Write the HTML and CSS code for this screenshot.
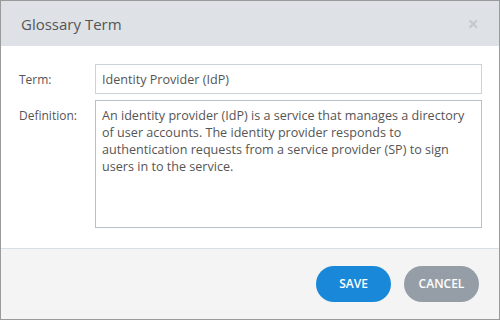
FILE: index.html
```html
<!DOCTYPE html>
<html lang="en">
<head>
    <meta charset="UTF-8">
    <title>Glossary Term</title>
    <link rel="stylesheet" href="styles.css">
</head>
<body>
    <div class="dialog">
        <div class="dialog-header">
            <h2>Glossary Term</h2>
            <span class="close">&times;</span>
        </div>

        <div class="dialog-body">
            <div class="row">
                <label for="term">Term:</label>
                <input type="text" id="term" value="Identity Provider (IdP)">
            </div>
            <div class="row">
                <label for="definition">Definition:</label>
                <textarea id="definition">An identity provider (IdP) is a service that manages a directory of user accounts. The identity provider responds to authentication requests from a service provider (SP) to sign users in to the service.</textarea>
            </div>
        </div>

        <div class="dialog-footer">
            <button class="btn btn-save">SAVE</button>
            <button class="btn btn-cancel">CANCEL</button>
        </div>
    </div>
</body>
</html>
```

FILE: styles.css
```css
* {
    margin: 0;
    padding: 0;
    box-sizing: border-box;
}

body {
    font-family: "Open Sans", Arial, sans-serif;
    background: white;
}

.dialog {
    width: 500px;
    height: 320px;
    border: 1px solid #9a9a9a;
    display: flex;
    flex-direction: column;
}

.dialog-header {
    height: 45px;
    background-color: #dee2e6;
    display: flex;
    align-items: center;
    justify-content: space-between;
    padding: 0 20px 0 20px;
}

.dialog-header h2 {
    font-size: 15px;
    font-weight: normal;
    color: #555;
}

.close {
    color: #c6cacd;
    font-size: 20px;
    font-weight: bold;
    line-height: 1;
}

.dialog-body {
    flex: 1;
    padding: 18px 17px 0 18px;
    border-bottom: 1px solid #d8e0e7;
}

.row {
    display: flex;
    margin-bottom: 6px;
}

.row label {
    width: 76px;
    font-size: 12px;
    color: #555;
    padding-top: 7px;
}

.row input,
.row textarea {
    flex: 1;
    font-family: "Open Sans", Arial, sans-serif;
    font-size: 12.6px;
    color: #555;
    border: 1px solid #cbd2d8;
    padding: 5px 6px;
    outline: none;
    resize: none;
}

.row input {
    height: 30px;
}

.row textarea {
    height: 128px;
    line-height: 17px;
    border-color: #b8c0c7;
    padding-top: 6px;
}

.dialog-footer {
    height: 70px;
    background-color: #f4f4f4;
    display: flex;
    align-items: center;
    justify-content: flex-end;
    gap: 13px;
    padding: 0 20px 1px 0;
}

.btn {
    width: 75px;
    height: 36px;
    border: none;
    border-radius: 18px;
    color: white;
    font-family: "Open Sans", Arial, sans-serif;
    font-size: 12px;
    font-weight: 600;
    cursor: pointer;
}

.btn-save {
    background-color: #1a88d8;
}

.btn-cancel {
    background-color: #959ea6;
}
```
